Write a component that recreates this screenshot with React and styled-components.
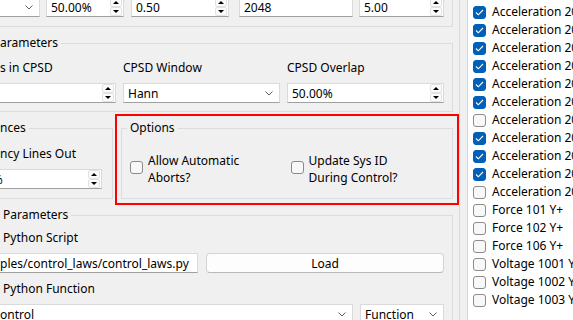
import React from 'react';
import styled, { createGlobalStyle } from 'styled-components';

const GlobalStyle = createGlobalStyle`
  html, body {
    margin: 0;
    padding: 0;
    background: #f0f0f0;
  }
  body {
    font-family: "Noto Sans", "Segoe UI", sans-serif;
    font-size: 12px;
    line-height: 16px;
    color: #000;
  }
`;

const Window = styled.div`
  display: flex;
  width: 573px;
  height: 320px;
  overflow: hidden;
  background: #f0f0f0;
`;

const LeftPane = styled.div`
  flex: none;
  width: 459px;
  overflow: hidden;
  border-right: 1px solid #dadada;
`;

const Splitter = styled.div`
  flex: none;
  width: 7px;
`;

const ListPane = styled.div`
  flex: 1;
  min-width: 0;
  overflow: hidden;
  background: #fff;
  border-left: 1px solid #d6d6d6;
  padding-top: 3px;
`;

const Form = styled.div`
  display: flex;
  flex-direction: column;
  gap: 8px;
  width: 493px;
  margin: -20px 0 0 -40px;
`;

const GroupRow = styled.div`
  display: flex;
  gap: 8px;
`;

const GroupBox = styled.fieldset`
  box-sizing: border-box;
  margin: 0;
  min-width: 0;
  border: 1px solid #dcdcdc;
  padding: ${p => p.$pad || '9px 8px 8px 8px'};
  display: flex;
  flex-direction: column;
  gap: ${p => p.$gap ?? 7}px;
  flex: ${p => (p.$w ? `0 0 ${p.$w}px` : '1 1 0')};
  outline: ${p => (p.$highlight ? '2px solid #ff0000' : 'none')};
  outline-offset: 4px;
`;

const Legend = styled.legend`
  padding: 0 3px;
  margin-left: ${p => p.$indent ?? -3}px;
  line-height: 16px;
`;

const Label = styled.div`
  padding-left: ${p => p.$indent || 0}px;
  margin-top: ${p => p.$mt || 0}px;
  white-space: nowrap;
  line-height: 16px;
`;

const Row = styled.div`
  display: flex;
  align-items: center;
`;

const Grid = styled.div`
  display: grid;
  grid-template-columns: ${p => p.$cols};
  column-gap: ${p => p.$gap ?? 7}px;
  row-gap: 7px;
`;

const Field = styled.div`
  box-sizing: border-box;
  flex: ${p => (p.$w ? `0 0 ${p.$w}px` : '1 1 0')};
  min-width: 0;
  margin-left: ${p => p.$ml || 0}px;
  height: 20px;
  display: flex;
  align-items: center;
  background: #fff;
  border: 1px solid #dadada;
  border-bottom-color: #a0a0a0;
  padding: 0 1px 0 4px;
  overflow: hidden;
  white-space: nowrap;
`;

const Value = styled.span`
  flex: 1;
  min-width: 0;
  padding-top: 1px;
  margin-left: ${p => p.$shift || 0}px;
`;

const SpinButtons = styled.div`
  flex: none;
  display: flex;
  flex-direction: column;
  width: 12px;
  height: 18px;
`;

const SpinButton = styled.div`
  box-sizing: border-box;
  flex: 1;
  display: flex;
  align-items: center;
  justify-content: center;
  border: 1px solid #e2e2e2;
  border-radius: 2px;
  background: #fbfbfb;

  &::after {
    content: '';
    border-left: 3px solid transparent;
    border-right: 3px solid transparent;
    ${p => (p.$down ? 'border-top: 3px solid #000;' : 'border-bottom: 3px solid #000;')}
  }
`;

const Chevron = styled.svg`
  flex: none;
  width: 8px;
  height: 5px;
  margin-right: 5px;
`;

const Button = styled.button`
  box-sizing: border-box;
  height: 20px;
  padding: 1px 0 0;
  font: inherit;
  color: #000;
  background: #fdfdfd;
  border: 1px solid #d3d3d3;
  border-bottom-color: #b9b9b9;
  border-radius: 4px;
`;

const Box = styled.span`
  box-sizing: border-box;
  flex: none;
  width: 13px;
  height: 13px;
  border-radius: 3px;
  border: 1px solid ${p => (p.$on ? '#005fb8' : '#8b8b8b')};
  background: ${p => (p.$on ? '#005fb8' : '#f8f8f8')};
  display: flex;
  align-items: center;
  justify-content: center;
`;

const OptionGrid = styled.div`
  display: grid;
  grid-template-columns: 1fr 1fr;
  column-gap: 7px;
  padding-top: 7px;
`;

const OptionItem = styled.label`
  display: flex;
  align-items: flex-start;
  gap: 5px;

  & > ${Box} {
    margin-top: 9px;
  }
`;

const OptionText = styled.span`
  line-height: 17px;
`;

const ListRow = styled.div`
  height: 18px;
  display: flex;
  align-items: center;
  gap: 6px;
  padding-left: 5px;
  white-space: nowrap;
`;

function CheckBox({ on }) {
  return (
    <Box $on={on}>
      {on && (
        <svg width="9" height="7" viewBox="0 0 9 7">
          <polyline points="1,3.5 3.3,5.8 8,1" fill="none" stroke="#fff" strokeWidth="1.1" />
        </svg>
      )}
    </Box>
  );
}

function SpinBox({ value, w, ml, shift }) {
  return (
    <Field $w={w} $ml={ml}>
      <Value $shift={shift}>{value}</Value>
      <SpinButtons>
        <SpinButton />
        <SpinButton $down />
      </SpinButtons>
    </Field>
  );
}

function ComboBox({ value, w, ml, shift }) {
  return (
    <Field $w={w} $ml={ml}>
      <Value $shift={shift}>{value}</Value>
      <Chevron viewBox="0 0 8 5">
        <polyline points="0.5,0.5 4,4 7.5,0.5" fill="none" stroke="#5f5f5f" strokeWidth="1" />
      </Chevron>
    </Field>
  );
}

const channels = [
  ['Acceleration 201 X+', true],
  ['Acceleration 201 Y+', true],
  ['Acceleration 201 Z+', true],
  ['Acceleration 202 X+', true],
  ['Acceleration 202 Y+', true],
  ['Acceleration 202 Z+', true],
  ['Acceleration 203 X+', false],
  ['Acceleration 203 Y+', true],
  ['Acceleration 203 Z+', true],
  ['Acceleration 204 X+', true],
  ['Acceleration 204 Y+', false],
  ['Force 101 Y+', false],
  ['Force 102 Y+', false],
  ['Force 106 Y+', false],
  ['Voltage 1001 Y+', false],
  ['Voltage 1002 Y+', false],
  ['Voltage 1003 Y+', false],
];

export default function App() {
  return (
    <>
      <GlobalStyle />
      <Window>
        <LeftPane>
          <Form>
            <GroupBox $pad="16px 8px 9px 8px">
              <Row>
                <ComboBox value="" />
                <SpinBox value="50.00%" w={78} ml={6} />
                <SpinBox value="0.50" w={98} ml={7} />
                <Field $w={114} $ml={10}><Value>2048</Value></Field>
                <SpinBox value="5.00" w={85} ml={6} />
              </Row>
            </GroupBox>

            <GroupBox>
              <Legend $indent={28}>arameters</Legend>
              <Grid $cols="1fr 157px 157px">
                <Label $indent={31}>s in CPSD</Label>
                <Label>CPSD Window</Label>
                <Label>CPSD Overlap</Label>
                <SpinBox value="" />
                <ComboBox value="Hann" />
                <SpinBox value="50.00%" />
              </Grid>
            </GroupBox>

            <GroupRow>
              <GroupBox $w={153} $pad="10px 10px 9px 8px">
                <Legend $indent={28}>nces</Legend>
                <Label $indent={31}>ncy Lines Out</Label>
                <Row>
                  <SpinBox value="50.00%" shift={-12} />
                </Row>
              </GroupBox>
              <GroupBox $highlight $pad="9px 8px 9px 8px">
                <Legend>Options</Legend>
                <OptionGrid>
                  <OptionItem>
                    <CheckBox on={false} />
                    <OptionText>Allow Automatic<br />Aborts?</OptionText>
                  </OptionItem>
                  <OptionItem>
                    <CheckBox on={false} />
                    <OptionText>Update Sys ID<br />During Control?</OptionText>
                  </OptionItem>
                </OptionGrid>
              </GroupBox>
            </GroupRow>

            <GroupBox $pad="7px 8px 8px 8px">
              <Legend $indent={31}>Parameters</Legend>
              <Label $indent={34}>Python Script</Label>
              <Grid $cols="1fr 238px" $gap={8}>
                <Field><Value $shift={26}>ples/control_laws/control_laws.py</Value></Field>
                <Button>Load</Button>
              </Grid>
              <Label $indent={34} $mt={1}>Python Function</Label>
              <Grid $cols="1fr 84px">
                <ComboBox value="ontrol" shift={26} />
                <ComboBox value="Function" />
              </Grid>
            </GroupBox>
          </Form>
        </LeftPane>
        <Splitter />
        <ListPane>
          {channels.map(([name, on]) => (
            <ListRow key={name}>
              <CheckBox on={on} />
              <span>{name}</span>
            </ListRow>
          ))}
        </ListPane>
      </Window>
    </>
  );
}
